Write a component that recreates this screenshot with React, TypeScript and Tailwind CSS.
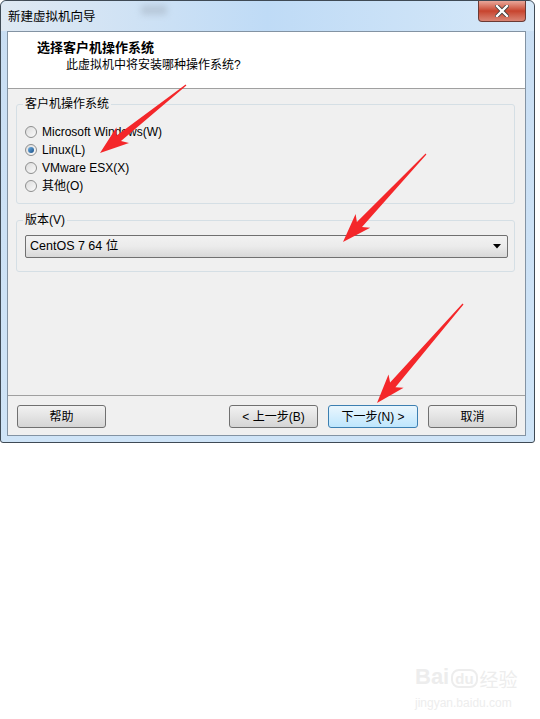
import React from "react";

type Pt = { x: number; y: number };

const arrowPoints = (tail: Pt, tip: Pt) => {
    const dx = tip.x - tail.x;
    const dy = tip.y - tail.y;
    const len = Math.sqrt(dx * dx + dy * dy);
    const ux = dx / len;
    const uy = dy / len;
    const nx = -uy;
    const ny = ux;
    const head = 24;
    const bx = tip.x - ux * head;
    const by = tip.y - uy * head;
    const wx = tip.x - ux * (head + 5);
    const wy = tip.y - uy * (head + 5);
    const pts = [
        [tail.x + nx * 0.6, tail.y + ny * 0.6],
        [bx + nx * 3.5, by + ny * 3.5],
        [wx + nx * 10, wy + ny * 10],
        [tip.x, tip.y],
        [wx - nx * 10, wy - ny * 10],
        [bx - nx * 3.5, by - ny * 3.5],
        [tail.x - nx * 0.6, tail.y - ny * 0.6],
    ];
    return pts.map((p) => `${p[0].toFixed(1)},${p[1].toFixed(1)}`).join(" ");
};

const arrows: [Pt, Pt][] = [
    [{ x: 186, y: 85 }, { x: 100, y: 153 }],
    [{ x: 426, y: 154 }, { x: 343, y: 242 }],
    [{ x: 463, y: 304 }, { x: 377, y: 403 }],
];

const Radio: React.FC<{ label: string; checked?: boolean }> = ({ label, checked }) => (
    <div className="flex items-center h-[18px] gap-[5px]">
        <span className="w-[12px] h-[12px] rounded-full border border-[#8e8f8f] bg-gradient-to-br from-[#dcdcdc] to-[#fbfbfb] flex items-center justify-center">
            {checked && <span className="w-[6px] h-[6px] rounded-full bg-gradient-to-br from-[#6fb3e6] to-[#1b4f86]" />}
        </span>
        <span>{label}</span>
    </div>
);

const Button: React.FC<{ label: string; primary?: boolean }> = ({ label, primary }) => (
    <div
        className={
            "h-[23px] flex items-center justify-center rounded-[3px] border " +
            (primary
                ? "w-[90px] border-[#3c7fb1] bg-gradient-to-b from-[#eaf6fd] to-[#bee6fd]"
                : "w-[89px] border-[#707070] bg-gradient-to-b from-[#f2f2f2] to-[#d5d5d5]")
        }
    >
        {label}
    </div>
);

export default function App() {
    return (
        <div className="relative w-[540px] h-[719px] bg-white overflow-hidden font-['Liberation_Sans','Noto_Sans_CJK_SC',sans-serif] text-[12px] text-black">
            <div className="w-[535px] h-[443px] border border-[#3f4a55] rounded-t-[6px] rounded-b-[3px] bg-gradient-to-b from-[#c9def3] to-[#cfe4f7] flex flex-col pl-[6px] pr-[8px] pb-[6px]">
                {/* title bar */}
                <div className="relative h-[30px] -ml-[6px] -mr-[8px] pl-[7px] flex items-start pt-[6px] rounded-t-[6px] bg-gradient-to-r from-[#dfe9f3] via-[#bfdbf6] to-[#d6e8f8]">
                    <span className="text-[12.5px] font-['Noto_Sans_CJK_SC',sans-serif] leading-[18px]">新建虚拟机向导</span>
                    <span className="absolute left-[140px] top-[4px] w-[26px] h-[10px] bg-[#9aa6b4] opacity-40 blur-[3px]" />
                    <div className="ml-auto mr-[8px] -mt-[6px] w-[48px] h-[21px] rounded-b-[4px] border border-t-0 border-[#6b3a34] bg-gradient-to-b from-[#e8a699] via-[#c7432d] to-[#d98474] flex items-center justify-center">
                        <svg width="14" height="12" viewBox="0 0 14 12">
                            <path d="M2 1 L12 11 M12 1 L2 11" stroke="#3c3c3c" strokeWidth="4" strokeLinecap="square" />
                            <path d="M2 1 L12 11 M12 1 L2 11" stroke="#ffffff" strokeWidth="2.4" strokeLinecap="square" />
                        </svg>
                    </div>
                </div>

                {/* client area */}
                <div className="flex-1 flex flex-col border border-[#8393a3] bg-[#f0f0f0] font-['Liberation_Sans','Noto_Sans_CJK_SC',sans-serif]">
                    <div className="h-[57px] bg-white border-b border-[#a0a0a0] pl-[29px] pt-[6px]">
                        <div className="text-[13px] font-bold leading-[19px]">选择客户机操作系统</div>
                        <div className="pl-[29px] leading-[17px]">此虚拟机中将安装哪种操作系统?</div>
                    </div>

                    <div className="flex-1 flex flex-col pl-[8px] pr-[10px]">
                        <div className="relative mt-[15px] h-[100px] border border-[#d5dfe5] rounded-[3px] pl-[8px] pt-[18px]">
                            <span className="absolute -top-[9px] left-[6px] px-[2px] bg-[#f0f0f0] leading-[16px]">客户机操作系统</span>
                            <Radio label="Microsoft Windows(W)" />
                            <Radio label="Linux(L)" checked />
                            <Radio label="VMware ESX(X)" />
                            <Radio label="其他(O)" />
                        </div>

                        <div className="relative mt-[16px] h-[52px] border border-[#d5dfe5] rounded-[3px] pl-[8px] pr-[6px] pt-[14px]">
                            <span className="absolute -top-[9px] left-[6px] px-[2px] bg-[#f0f0f0] leading-[16px]">版本(V)</span>
                            <div className="h-[23px] flex items-center border border-[#707070] rounded-[2px] bg-gradient-to-b from-[#f2f2f2] via-[#ebebeb] to-[#d8d8d8] pl-[4px] pr-[6px]">
                                <span className="text-[12.5px]">CentOS 7 64 位</span>
                                <svg className="ml-auto" width="8" height="5" viewBox="0 0 8 5">
                                    <path d="M0 0 L8 0 L4 4.5 Z" fill="#000" />
                                </svg>
                            </div>
                        </div>
                    </div>

                    <div className="h-[40px] border-t border-[#a0a0a0] flex items-start pt-[9px] pl-[9px] pr-[8px]">
                        <Button label="帮助" />
                        <div className="ml-auto flex gap-[10px]">
                            <Button label="< 上一步(B)" />
                            <Button label="下一步(N) >" primary />
                            <Button label="取消" />
                        </div>
                    </div>
                </div>
            </div>

            {/* baidu watermark */}
            <div className="absolute left-[415px] top-[666px] text-[#ededed] select-none">
                <div className="flex items-end gap-[2px] leading-none">
                    <span className="text-[22px] font-bold font-['Liberation_Sans',sans-serif]">Bai</span>
                    <span className="text-[15px] font-bold font-['Liberation_Sans',sans-serif] border-2 border-[#ededed] rounded-[8px] px-[2px]">du</span>
                    <span className="text-[19px] font-['Noto_Sans_CJK_SC',sans-serif]">经验</span>
                </div>
                <div className="text-[12px] font-['Liberation_Sans',sans-serif] mt-[6px]">jingyan.baidu.com</div>
            </div>

            {/* annotation arrows */}
            <svg className="absolute inset-0 pointer-events-none" width="540" height="719">
                {arrows.map(([a, b], i) => (
                    <polygon key={i} points={arrowPoints(a, b)} fill="#f4272a" />
                ))}
            </svg>
        </div>
    );
}
